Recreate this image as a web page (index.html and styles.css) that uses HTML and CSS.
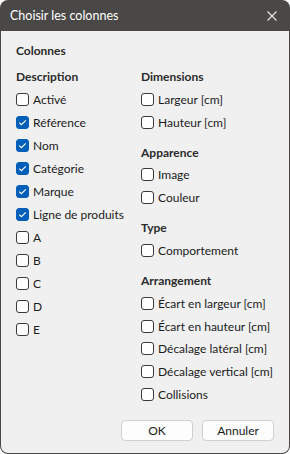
FILE: index.html
```html
<!DOCTYPE html>
<html lang="fr">
<head>
    <meta charset="UTF-8">
    <meta content="width=device-width, initial-scale=1.0" name="viewport">
    <title>Choisir les colonnes</title>
    <link rel="stylesheet" href="styles.css">
</head>
<body>
<div class="dialog">
    <div class="titlebar">
        <span class="title">Choisir les colonnes</span>
        <svg class="close" width="10" height="10" viewBox="0 0 10 10">
            <path d="M0.5 0.5 L9.5 9.5 M9.5 0.5 L0.5 9.5" stroke="#e6e6e6" stroke-width="1.1" fill="none"/>
        </svg>
    </div>

    <div class="content">
        <div class="heading main">Colonnes</div>

        <div class="columns">
            <div class="col left">
                <div class="heading">Description</div>
                <label class="row"><span class="box"></span>Activé</label>
                <label class="row"><span class="box checked"></span>Référence</label>
                <label class="row"><span class="box checked"></span>Nom</label>
                <label class="row"><span class="box checked"></span>Catégorie</label>
                <label class="row"><span class="box checked"></span>Marque</label>
                <label class="row"><span class="box checked"></span>Ligne de produits</label>
                <label class="row"><span class="box"></span>A</label>
                <label class="row"><span class="box"></span>B</label>
                <label class="row"><span class="box"></span>C</label>
                <label class="row"><span class="box"></span>D</label>
                <label class="row"><span class="box"></span>E</label>
            </div>

            <div class="col right">
                <div class="heading">Dimensions</div>
                <label class="row"><span class="box"></span>Largeur [cm]</label>
                <label class="row"><span class="box"></span>Hauteur [cm]</label>

                <div class="heading group">Apparence</div>
                <label class="row"><span class="box"></span>Image</label>
                <label class="row"><span class="box"></span>Couleur</label>

                <div class="heading group">Type</div>
                <label class="row"><span class="box"></span>Comportement</label>

                <div class="heading group">Arrangement</div>
                <label class="row"><span class="box"></span>Écart en largeur [cm]</label>
                <label class="row"><span class="box"></span>Écart en hauteur [cm]</label>
                <label class="row"><span class="box"></span>Décalage latéral [cm]</label>
                <label class="row"><span class="box"></span>Décalage vertical [cm]</label>
                <label class="row"><span class="box"></span>Collisions</label>
            </div>
        </div>

        <div class="buttons">
            <button class="btn">OK</button>
            <button class="btn">Annuler</button>
        </div>
    </div>
</div>
</body>
</html>
```

FILE: styles.css
```css
html, body {
    margin: 0;
    padding: 0;
    background: #ffffff;
}

body {
    font-family: Lato, "Noto Sans", sans-serif;
    font-size: 12px;
    color: #1b1b1b;
}

.dialog {
    width: 290px;
    height: 454px;
    box-sizing: border-box;
    background: #4a4846;
    border-radius: 8px;
    padding: 0 1px 1px 1px;
    display: flex;
    flex-direction: column;
    overflow: hidden;
}

.titlebar {
    height: 31px;
    display: flex;
    align-items: center;
    justify-content: space-between;
    padding: 0 12px 0 9px;
    flex-shrink: 0;
}

.title {
    color: #ffffff;
    font-size: 12.5px;
}

.content {
    flex: 1;
    background: #f0f0f0;
    border-radius: 0 0 7px 7px;
    padding: 8px 15px 12px 15px;
    display: flex;
    flex-direction: column;
}

.heading {
    height: 23px;
    line-height: 23px;
    font-weight: 700;
    color: #2b2b2b;
    white-space: nowrap;
}

.heading.main {
    margin-bottom: 3px;
}

.heading.group {
    margin-top: 7px;
}

.columns {
    display: grid;
    grid-template-columns: 125px 1fr;
}

.row {
    height: 23px;
    display: flex;
    align-items: center;
    gap: 4px;
    white-space: nowrap;
}

.right .row {
    height: 22.8px;
}

.box {
    width: 13px;
    height: 13px;
    box-sizing: border-box;
    border: 1px solid #3a3a3a;
    border-radius: 3px;
    background: #ffffff;
    flex-shrink: 0;
}

.box.checked {
    border-color: #005fb8;
    background: #005fb8 url("data:image/svg+xml;utf8,<svg xmlns='http://www.w3.org/2000/svg' width='13' height='13' viewBox='0 0 13 13'><path d='M3.2 6.6 L5.4 8.7 L9.8 4.3' stroke='white' stroke-width='1.2' fill='none'/></svg>") center / 13px 13px no-repeat;
}

.buttons {
    margin-top: auto;
    display: flex;
    justify-content: flex-end;
    gap: 9px;
}

.btn {
    width: 72px;
    height: 21px;
    font-family: inherit;
    font-size: inherit;
    color: #1b1b1b;
    background: #fdfdfd;
    border: 1px solid #d0d0d0;
    border-radius: 4px;
    padding: 0;
}
```
